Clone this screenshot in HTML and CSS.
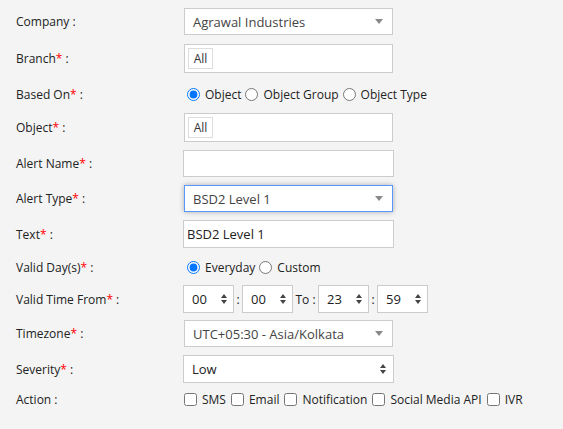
FILE: index.html
```html
<!DOCTYPE html>
<html>
<head>
<meta charset="utf-8">
<link rel="stylesheet" href="styles.css">
</head>
<body>
<form class="form">
  <div class="row r-company">
    <label class="lbl">Company :</label>
    <div class="field">
      <div class="sel">
        <span class="sel-text">Agrawal Industries</span>
        <span class="tri"></span>
      </div>
    </div>
  </div>
  <div class="row r-branch">
    <label class="lbl">Branch<span class="req">*</span> :</label>
    <div class="field">
      <div class="multi"><span class="tag">All</span></div>
    </div>
  </div>
  <div class="row r-radio1">
    <label class="lbl">Based On<span class="req">*</span> :</label>
    <div class="field opts">
      <input type="radio" name="based" checked><span class="opt">Object</span>
      <input type="radio" name="based"><span class="opt">Object Group</span>
      <input type="radio" name="based"><span class="opt">Object Type</span>
    </div>
  </div>
  <div class="row r-object">
    <label class="lbl">Object<span class="req">*</span> :</label>
    <div class="field">
      <div class="multi"><span class="tag">All</span></div>
    </div>
  </div>
  <div class="row r-name">
    <label class="lbl">Alert Name<span class="req">*</span> :</label>
    <div class="field">
      <div class="txt"></div>
    </div>
  </div>
  <div class="row r-type">
    <label class="lbl">Alert Type<span class="req">*</span> :</label>
    <div class="field">
      <div class="sel focus">
        <span class="sel-text">BSD2 Level 1</span>
        <span class="tri"></span>
      </div>
    </div>
  </div>
  <div class="row r-text">
    <label class="lbl">Text<span class="req">*</span> :</label>
    <div class="field">
      <div class="txt"><span class="val">BSD2 Level 1</span></div>
    </div>
  </div>
  <div class="row r-radio2">
    <label class="lbl">Valid Day(s)<span class="req">*</span> :</label>
    <div class="field opts">
      <input type="radio" name="days" checked><span class="opt">Everyday</span>
      <input type="radio" name="days"><span class="opt">Custom</span>
    </div>
  </div>
  <div class="row r-time">
    <label class="lbl">Valid Time From<span class="req">*</span> :</label>
    <div class="field times">
      <div class="tbox"><span>00</span><span class="ud"><i class="up"></i><i class="dn"></i></span></div>
      <span class="colon">:</span>
      <div class="tbox"><span>00</span><span class="ud"><i class="up"></i><i class="dn"></i></span></div>
      <span class="to">To :</span>
      <div class="tbox"><span>23</span><span class="ud"><i class="up"></i><i class="dn"></i></span></div>
      <span class="colon">:</span>
      <div class="tbox"><span>59</span><span class="ud"><i class="up"></i><i class="dn"></i></span></div>
    </div>
  </div>
  <div class="row r-tz">
    <label class="lbl">Timezone<span class="req">*</span> :</label>
    <div class="field">
      <div class="sel">
        <span class="sel-text">UTC+05:30 - Asia/Kolkata</span>
        <span class="tri"></span>
      </div>
    </div>
  </div>
  <div class="row r-sev">
    <label class="lbl">Severity<span class="req">*</span> :</label>
    <div class="field">
      <div class="txt native"><span class="val">Low</span><span class="ud"><i class="up"></i><i class="dn"></i></span></div>
    </div>
  </div>
  <div class="row r-action">
    <label class="lbl">Action :</label>
    <div class="field opts">
      <input type="checkbox"><span class="opt">SMS</span>
      <input type="checkbox"><span class="opt">Email</span>
      <input type="checkbox"><span class="opt">Notification</span>
      <input type="checkbox"><span class="opt">Social Media API</span>
      <input type="checkbox"><span class="opt">IVR</span>
    </div>
  </div>
</form>
</body>
</html>
```

FILE: styles.css
```css
html, body {
  margin: 0;
  padding: 0;
  background: #f4f4f4;
}
body {
  font-family: "Open Sans", "Liberation Sans", sans-serif;
  font-size: 12px;
  color: #222;
}
.form {
  display: flex;
  flex-direction: column;
  padding: 8px 0 0 16px;
}
.row {
  display: flex;
  align-items: center;
}
.lbl {
  width: 167px;
  flex: none;
}
.req {
  color: #f00;
}
.field {
  display: flex;
  align-items: center;
}
.sel {
  box-sizing: border-box;
  width: 209px;
  height: 27px;
  margin-left: 1px;
  background: #fff;
  border: 1px solid #ccc;
  display: flex;
  align-items: center;
  justify-content: space-between;
  padding: 0 9px 0 8px;
  color: #444;
  font-size: 13px;
}
.sel.focus {
  border-color: #5897fb;
  box-shadow: 0 0 5px rgba(0, 0, 0, 0.3);
}
.tri {
  width: 0;
  height: 0;
  border-left: 4px solid transparent;
  border-right: 4px solid transparent;
  border-top: 5px solid #888;
}
.multi {
  box-sizing: border-box;
  width: 209px;
  height: 29px;
  margin-left: 1px;
  background: #fff;
  border: 1px solid #ccc;
  display: flex;
  align-items: center;
  padding-left: 3px;
}
.tag {
  box-sizing: border-box;
  height: 21px;
  width: 25px;
  border: 1px solid #ddd;
  background: #fff;
  display: flex;
  align-items: center;
  justify-content: center;
  font-size: 12px;
  color: #333;
}
.txt {
  box-sizing: border-box;
  width: 211px;
  height: 27px;
  background: #fff;
  border: 1px solid #ccc;
  display: flex;
  align-items: center;
  padding: 0 3px;
  font-size: 13px;
  color: #222;
}
.r-company { height: 27px; }
.r-branch { height: 29px; margin-top: 9px; }
.r-radio1 { height: 22px; margin-top: 10px; }
.r-object { height: 29px; margin-top: 8px; }
.r-name { height: 27px; margin-top: 8px; }
.r-type { height: 27px; margin-top: 8px; }
.r-text { height: 28px; margin-top: 8px; }
.r-text .txt { height: 28px; }
.r-radio2 { height: 22px; margin-top: 8px; }
.r-time { height: 28px; margin-top: 7px; }
.r-tz { height: 27px; margin-top: 7px; }
.r-sev { height: 28px; margin-top: 8px; }
.r-action { height: 16px; margin-top: 8px; }

.opts input {
  margin: 0 5px 0 4px;
  width: 13px;
  height: 13px;
  accent-color: #0075ff;
}
.opts input:first-child {
  margin-left: 4px;
}
.opt {
  font-size: 12px;
  color: #222;
}
.r-action .opts input {
  margin: 0 5px 0 5px;
}
.r-action .opts input:first-child {
  margin-left: 1px;
}

.times {
  font-size: 13px;
}
.tbox {
  box-sizing: border-box;
  width: 51px;
  height: 28px;
  background: #fff;
  border: 1px solid #ccc;
  display: flex;
  align-items: center;
  justify-content: space-between;
  padding: 0 6px 0 8px;
  color: #222;
}
.colon {
  width: 8px;
  text-align: center;
  font-size: 12px;
}
.to {
  width: 25px;
  text-align: center;
  font-size: 12px;
}
.ud {
  display: flex;
  flex-direction: column;
  gap: 2px;
}
.ud i {
  display: block;
  width: 0;
  height: 0;
  border-left: 3.5px solid transparent;
  border-right: 3.5px solid transparent;
}
.ud .up { border-bottom: 4px solid #444; }
.ud .dn { border-top: 4px solid #444; }
.native {
  justify-content: space-between;
  padding: 0 7px 0 8px;
}
.r-sev .txt { height: 28px; }
```
